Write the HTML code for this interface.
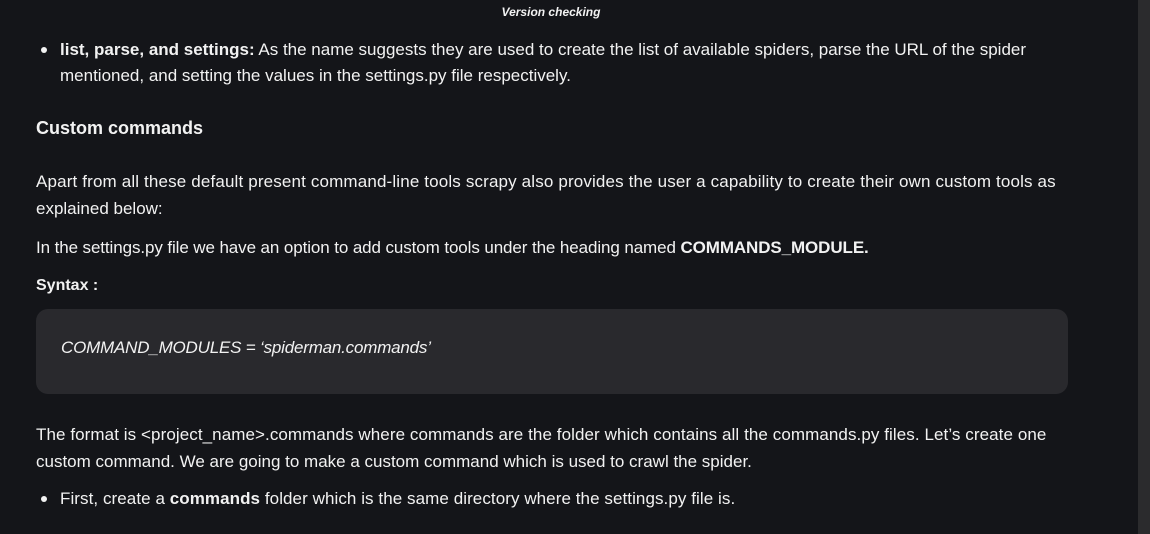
<!DOCTYPE html>
<html><head><meta charset="utf-8"><style>
html,body{margin:0;padding:0;width:1150px;height:534px;overflow:hidden;background:#141519;color:#f2f2f2;font-family:"Liberation Sans",sans-serif;font-size:17px;}
.t{position:absolute;white-space:nowrap;line-height:20px;}
b{font-weight:bold;}
.sb{position:absolute;left:1138px;top:0;width:12px;height:534px;background:#2b2b2d;}
.code{position:absolute;left:36px;top:309px;width:1032px;height:85px;background:#29292d;border-radius:12px;}
.dot{position:absolute;width:6px;height:6px;border-radius:50%;background:#f2f2f2;}
</style></head><body>
<div class="t" style="left:0;width:1102px;text-align:center;top:2px;font-size:12px;font-style:italic;font-weight:bold;">Version checking</div>
<div class="dot" style="left:41px;top:47px"></div>
<div class="t" style="left:60px;top:40px"><b>list, parse, and settings:</b> As the name suggests they are used to create the list of available spiders, parse the URL of the spider</div>
<div class="t" style="left:60px;top:66px">mentioned, and setting the values in the settings.py file respectively.</div>
<div class="t" style="left:36px;top:118px;font-size:18px;font-weight:bold">Custom commands</div>
<div class="t" style="left:36px;top:172px;letter-spacing:0.15px">Apart from all these default present command-line tools scrapy also provides the user a capability to create their own custom tools as</div>
<div class="t" style="left:36px;top:199px">explained below:</div>
<div class="t" style="left:36px;top:238px;letter-spacing:-0.1px">In the settings.py file we have an option to add custom tools under the heading named <b>COMMANDS_MODULE.</b></div>
<div class="t" style="left:36px;top:276px;font-size:16px;font-weight:bold">Syntax :</div>
<div class="code"></div>
<div class="t" style="left:61px;top:338px;font-style:italic;letter-spacing:-0.2px">COMMAND_MODULES = ‘spiderman.commands’</div>
<div class="t" style="left:36px;top:425px;letter-spacing:0.08px">The format is &lt;project_name&gt;.commands where commands are the folder which contains all the commands.py files. Let’s create one</div>
<div class="t" style="left:36px;top:452px">custom command. We are going to make a custom command which is used to crawl the spider.</div>
<div class="dot" style="left:41px;top:496px"></div>
<div class="t" style="left:60px;top:489px;letter-spacing:0.07px">First, create a <b>commands</b> folder which is the same directory where the settings.py file is.</div>
<div class="sb"></div>
</body></html>
